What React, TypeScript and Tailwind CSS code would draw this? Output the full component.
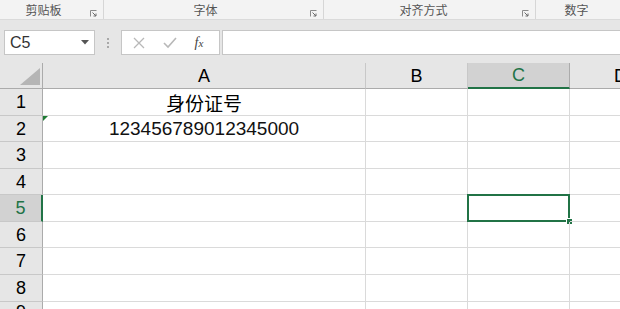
import React from "react";

function Launcher() {
  return (
    <svg width="7" height="7" viewBox="0 0 7 7" className="block">
      <path d="M0.5 6.5 V0.5 H6.5" stroke="#8a8a8a" strokeWidth="1" fill="none" />
      <path d="M2.5 2.5 L6 6 M6 3.5 V6 H3.5" stroke="#6a6a6a" strokeWidth="1" fill="none" />
    </svg>
  );
}

function RibbonGroup({ label, width, shift }: { label: string; width: number; shift: number }) {
  return (
    <div className="relative h-full border-r border-[#d6d6d6] flex items-center justify-center shrink-0" style={{ width, paddingRight: shift }}>
      <span className="text-[12px] leading-none text-[#555]">{label}</span>
      <div className="absolute right-[6px] top-[10px]">
        <Launcher />
      </div>
    </div>
  );
}

const rowHeights = [27, 26, 27, 26, 27, 26, 27, 27, 20];
const cols = ["A", "B", "C", "D"];

export default function App() {
  return (
    <div
      className="w-[620px] h-[309px] overflow-hidden bg-[#e6e6e6] flex flex-col"
      style={{ fontFamily: '"Liberation Sans", "Noto Sans CJK SC", sans-serif' }}
    >
      {/* Ribbon labels */}
      <div className="h-[20px] bg-[#f3f3f3] border-b border-[#dadada] flex shrink-0" style={{ fontFamily: '"Noto Sans CJK SC", sans-serif' }}>
        <RibbonGroup label="剪贴板" width={104} shift={16} />
        <RibbonGroup label="字体" width={220} shift={16} />
        <RibbonGroup label="对齐方式" width={212} shift={12} />
        <div className="flex-1 flex items-center justify-center pr-[3px]">
          <span className="text-[12px] leading-none text-[#555]">数字</span>
        </div>
      </div>

      {/* Formula bar */}
      <div className="h-[43px] shrink-0 flex items-start pt-[10px] pl-[4px]">
        <div className="w-[91px] h-[25px] bg-white border border-[#c6c6c6] flex items-center justify-between pl-[5px] pr-[5px]">
          <span className="text-[16px] text-[#333] leading-none">C5</span>
          <svg width="8" height="5" viewBox="0 0 8 5">
            <path d="M0 0 H8 L4 4.5 Z" fill="#555" />
          </svg>
        </div>
        <div className="w-[26px] h-[25px] flex flex-col items-center justify-center gap-[2px]">
          <div className="w-[2px] h-[2px] bg-[#a8a8a8]" />
          <div className="w-[2px] h-[2px] bg-[#a8a8a8]" />
          <div className="w-[2px] h-[2px] bg-[#a8a8a8]" />
        </div>
        <div className="w-[99px] h-[25px] bg-white border border-[#c6c6c6] flex items-center">
          <div className="w-[34px] flex justify-center">
            <svg width="12" height="12" viewBox="0 0 12 12">
              <path d="M1 1 L11 11 M11 1 L1 11" stroke="#b8b8b8" strokeWidth="1.3" />
            </svg>
          </div>
          <div className="w-[28px] flex justify-center">
            <svg width="14" height="12" viewBox="0 0 14 12">
              <path d="M1 6 L5 10 L13 1" stroke="#b8b8b8" strokeWidth="1.6" fill="none" />
            </svg>
          </div>
          <div className="w-[30px] flex justify-center">
            <span className="text-[14px] italic text-[#444] leading-none" style={{ fontFamily: '"Liberation Serif", serif' }}>
              f<span className="text-[11px]">x</span>
            </span>
          </div>
        </div>
        <div className="ml-[2px] flex-1 h-[25px] bg-white border border-[#c6c6c6] border-r-0" />
      </div>

      {/* Grid */}
      <div className="flex-1 min-h-0 overflow-hidden bg-white">
        <div
          className="grid w-[672px]"
          style={{ gridTemplateColumns: "43px 323px 102px 102px 102px", gridTemplateRows: `26px ${rowHeights.map((h) => h + "px").join(" ")}` }}
        >
          {/* header row */}
          <div className="bg-[#e6e6e6] border-r border-b border-[#ababab] relative">
            <svg width="20" height="17" viewBox="0 0 20 17" className="absolute left-[20px] top-[5px]">
              <path d="M20 0 V17 H0 Z" fill="#b5b5b5" />
            </svg>
          </div>
          {cols.map((c) => {
            const sel = c === "C";
            return (
              <div
                key={c}
                className={
                  sel
                    ? "bg-[#d2d2d2] border-r border-[#ababab] border-b-2 border-b-[#217346] flex items-center justify-center text-[18px] text-[#217346]"
                    : "bg-[#e6e6e6] border-r border-b border-[#c8c8c8] border-b-[#ababab] flex items-center justify-center text-[18px] text-black"
                }
              >
                <span className="leading-none">{c}</span>
              </div>
            );
          })}

          {rowHeights.map((_, i) => {
            const r = i + 1;
            const sel = r === 5;
            return (
              <React.Fragment key={r}>
                <div
                  className={
                    sel
                      ? "bg-[#d2d2d2] border-r-2 border-r-[#217346] border-b border-[#c8c8c8] flex items-center justify-center text-[18px] text-[#217346]"
                      : "bg-[#e6e6e6] border-r border-r-[#ababab] border-b border-[#c8c8c8] flex items-center justify-center text-[18px] text-black"
                  }
                >
                  <span className="leading-none">{r}</span>
                </div>
                {cols.map((c) => (
                  <div key={c} className="relative border-r border-b border-[#dadada] flex items-center justify-center">
                    {c === "A" && r === 1 && (
                      <span className="text-[19px] leading-none text-black" style={{ fontFamily: '"Noto Sans CJK SC", sans-serif' }}>
                        身份证号
                      </span>
                    )}
                    {c === "A" && r === 2 && (
                      <>
                        <svg width="5" height="5" viewBox="0 0 5 5" className="absolute left-0 top-0">
                          <path d="M0 0 H5 L0 5 Z" fill="#1e7b34" />
                        </svg>
                        <span className="text-[19px] leading-none text-[#111]">123456789012345000</span>
                      </>
                    )}
                    {c === "C" && r === 5 && (
                      <>
                        <div className="absolute left-[-1px] top-[-1px] right-[-1px] bottom-[-1px] border-2 border-[#217346]" />
                        <div className="absolute right-[-4px] bottom-[-4px] w-[7px] h-[7px] bg-[#217346] border border-white" />
                      </>
                    )}
                  </div>
                ))}
              </React.Fragment>
            );
          })}
        </div>
      </div>
    </div>
  );
}
